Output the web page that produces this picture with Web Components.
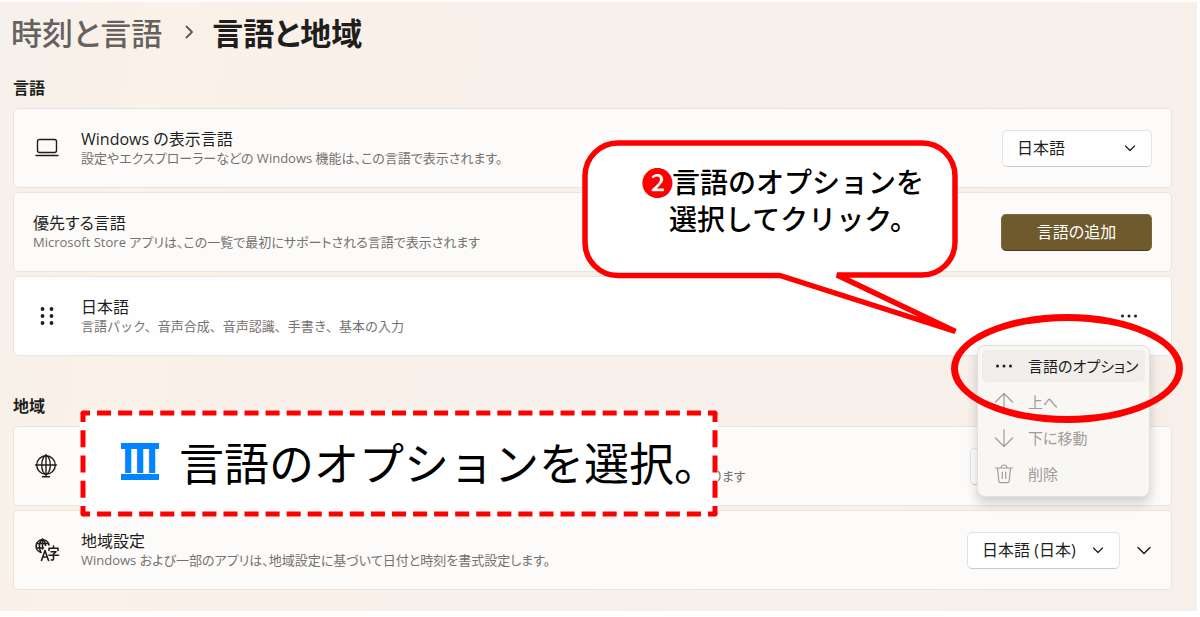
<!DOCTYPE html>
<html lang="ja">
<head>
<meta charset="utf-8">
<meta name="viewport" content="width=device-width, initial-scale=1">
<title>言語と地域</title>
<style>
  body {
    margin: 0;
    background: #fff;
    color: #1f1e1d;
    font-family: "Open Sans", "Noto Sans CJK JP", sans-serif;
    font-size: 16px;
    line-height: 20px;
  }
</style>
</head>
<body>
<settings-page>
  <bread-crumb slot="title" parent="時刻と言語" current="言語と地域"></bread-crumb>

  <settings-section heading="言語">
    <settings-card>
      <ui-icon slot="icon" name="laptop"></ui-icon>
      <span slot="title">Windows の表示言語</span>
      <span slot="description">設定やエクスプローラーなどの Windows 機能は、この言語で表示されます。</span>
      <drop-down label="Windows の表示言語" value="日本語" style="--width:150px"></drop-down>
    </settings-card>
    <settings-card>
      <span slot="title">優先する言語</span>
      <span slot="description">Microsoft Store アプリは、この一覧で最初にサポートされる言語で表示されます</span>
      <accent-button>言語の追加</accent-button>
    </settings-card>
    <settings-card active>
      <ui-icon slot="icon" name="grip"></ui-icon>
      <span slot="title">日本語</span>
      <span slot="description">言語パック、音声合成、音声認識、手書き、基本の入力</span>
      <more-menu>
        <menu-item icon="more" selected>言語のオプション</menu-item>
        <menu-item icon="up" disabled>上へ</menu-item>
        <menu-item icon="down" disabled>下に移動</menu-item>
        <menu-item icon="trash" disabled>削除</menu-item>
      </more-menu>
    </settings-card>
  </settings-section>

  <settings-section heading="地域">
    <settings-card style="--indent:630px">
      <ui-icon slot="icon" name="globe"></ui-icon>
      <span slot="description">ります</span>
      <drop-down label="国または地域" value="" style="--width:178px; margin-right:4px"></drop-down>
    </settings-card>
    <settings-card>
      <ui-icon slot="icon" name="locale"></ui-icon>
      <span slot="title">地域設定</span>
      <span slot="description">Windows および一部のアプリは、地域設定に基づいて日付と時刻を書式設定します。</span>
      <drop-down label="地域設定" value="日本語 (日本)" style="--width:153px"></drop-down>
      <expand-button></expand-button>
    </settings-card>
  </settings-section>

  <callout-bubble slot="note" number="❷">
    <span>言語のオプションを</span>
    <span slot="second">選択してクリック。</span>
  </callout-bubble>
  <step-banner slot="note" number="Ⅲ">言語のオプションを選択。</step-banner>
</settings-page>

<script>
  function define(name, html, setup) {
    const template = document.createElement('template');
    template.innerHTML = html;
    customElements.define(name, class extends HTMLElement {
      constructor() {
        super();
        this.attachShadow({ mode: 'open' }).append(template.content.cloneNode(true));
      }
      connectedCallback() {
        if (setup) setup(this, this.shadowRoot);
      }
    });
  }

  const icons = {
    laptop: '<rect x="4.5" y="5.5" width="19" height="13" rx="2"/><path d="M3 21.5h22"/>',
    grip: '<g fill="currentColor" stroke="none"><circle cx="9.500" cy="7" r="1.900"/><circle cx="18.500" cy="7" r="1.900"/><circle cx="9.500" cy="14" r="1.900"/><circle cx="18.500" cy="14" r="1.900"/><circle cx="9.500" cy="21" r="1.900"/><circle cx="18.500" cy="21" r="1.900"/></g>',
    globe: '<circle cx="13" cy="13" r="9.300"/><ellipse cx="13" cy="13" rx="4.300" ry="9.300"/><path d="M2.500 13h21M13 2.500v22M9.500 24.800h7"/>',
    locale: '<g stroke-width="1.600"><path d="M8 16.500a6.500 6.500 0 1 1 8-7.500"/><path d="M9.500 3v10M3.500 7.500h12M3.500 12h7"/><path d="M7.500 15.500C5.500 11 6 5.500 9.500 3.300c2.200 1.500 3 3.700 3 6.200"/><path d="M8.500 24.500l3.500-10 3.500 10M9.800 21h4.400"/><path d="M20.500 10v2M16 14.500v-2.300h9v2.300M18 15.700h5L20.500 18v5q0 1.300-2.300 1M16 19.300h9.500"/></g>',
    more: '<g fill="currentColor" stroke="none"><circle cx="7.500" cy="14" r="1.500"/><circle cx="14" cy="14" r="1.500"/><circle cx="20.500" cy="14" r="1.500"/></g>',
    up: '<path d="M14 22.500V5.500M5.500 14L14 5.500l8.500 8.500"/>',
    down: '<path d="M14 5.500v17M5.500 14l8.500 8.500 8.500-8.500"/>',
    trash: '<path d="M5.500 8h17M7.500 8l1.300 13q.2 1.700 2 1.700h6.400q1.800 0 2-1.700L20.500 8M11 8a3 3 0 0 1 6 0M12.300 12v6.500M15.700 12v6.500"/>',
    chevron: '<path d="M9.500 12l4.500 4.500 4.500-4.500"/>',
    expand: '<path d="M8 11.500l6 6 6-6"/>',
    next: '<path d="M11.500 8.500L17 14l-5.500 5.500"/>'
  };

  define('ui-icon', `
    <style>
      :host { display: block; width: 28px; height: 28px; flex: none; }
      svg { display: block; width: 28px; height: 28px; fill: none; stroke: currentColor;
            stroke-width: var(--stroke, 1.4); stroke-linecap: round; stroke-linejoin: round; }
    </style>
    <svg viewBox="0 0 28 28" aria-hidden="true"></svg>`,
    (el, root) => { root.querySelector('svg').innerHTML = icons[el.getAttribute('name')]; });

  define('settings-page', `
    <style>
      :host { display: block; position: relative; padding-top: 2px; }
      main { display: flex; flex-direction: column; margin-right: 3px; padding: 6px 25px 21px 13px;
             background: linear-gradient(100deg, #f6f1ec 0, #faf1e8 12%, #f8f0ea 40%, #f7f0eb 75%, #f7efe9 100%); }
    </style>
    <main><slot name="title"></slot><slot></slot></main>
    <slot name="note"></slot>`);

  define('bread-crumb', `
    <style>
      :host { display: block; }
      nav, h1 { display: flex; align-items: center; margin: 0; font-size: 31px; line-height: 48px;
                font-weight: 500; font-family: "Noto Sans CJK JP", sans-serif; font-feature-settings: "palt"; }
      nav { margin-left: -2px; }
      a { color: #65615e; text-decoration: none; }
      h1 { font-weight: 700; }
      ui-icon { margin: 0 9px 0 13px; color: #5c5855; --stroke: 1.8; }
    </style>
    <nav><a href="#"></a><ui-icon name="next"></ui-icon><h1></h1></nav>`,
    (el, root) => {
      root.querySelector('a').textContent = el.getAttribute('parent');
      root.querySelector('h1').textContent = el.getAttribute('current');
    });

  define('settings-section', `
    <style>
      :host { display: block; padding-top: 22px; }
      :host(:last-of-type) { padding-top: 40px; }
      h2 { margin: 0 0 10px; font-size: 16px; line-height: 20px; font-weight: 700; }
      div { display: flex; flex-direction: column; gap: 4px; }
    </style>
    <section><h2></h2><div><slot></slot></div></section>`,
    (el, root) => { root.querySelector('h2').textContent = el.getAttribute('heading'); });

  define('settings-card', `
    <style>
      :host { display: flex; align-items: center; box-sizing: border-box; min-height: 80px;
              padding: 0 19px; border: 1px solid #ebe4de; border-radius: 5px; background: #fcfbf9; }
      :host([active]) { background: #fefefe; }
      slot[name="icon"]::slotted(*) { margin-right: 20px; }
      .text { flex: 1; min-width: 0; }
      .title { min-height: 20px; line-height: 20px; font-feature-settings: "palt"; }
      .desc { padding-left: var(--indent, 0); font-size: 13px; line-height: 18px; color: #75716e;
              font-feature-settings: "palt"; }
      :host([active]) .desc { font-feature-settings: normal; }
    </style>
    <slot name="icon"></slot>
    <div class="text">
      <div class="title"><slot name="title"></slot></div>
      <div class="desc"><slot name="description"></slot></div>
    </div>
    <slot></slot>`);

  define('drop-down', `
    <style>
      :host { display: grid; width: var(--width); align-items: center; }
      select { grid-area: 1 / 1; width: 100%; height: 37px; margin: 0; padding: 0 14px;
               appearance: none; border: 1px solid #e6e2df; border-bottom-color: #cfcac6;
               border-radius: 5px; background: #fefefe; color: inherit; font: inherit; }
      ui-icon { grid-area: 1 / 1; justify-self: end; margin-right: 8px; pointer-events: none; --stroke: 1.2; }
    </style>
    <select><option></option></select><ui-icon name="chevron"></ui-icon>`,
    (el, root) => {
      root.querySelector('select').setAttribute('aria-label', el.getAttribute('label'));
      root.querySelector('option').textContent = el.getAttribute('value');
    });

  define('accent-button', `
    <style>
      :host { display: block; }
      button { width: 151px; height: 37px; padding: 0; border: 1px solid #7d6940; border-bottom-color: #4a3b1c;
               border-radius: 5px; background: #6f5a2e; color: #fff; font: inherit; font-feature-settings: "palt"; }
    </style>
    <button type="button"><slot></slot></button>`);

  define('expand-button', `
    <style>
      :host { display: block; margin: 0 -6px 0 10px; }
      button { display: block; padding: 0; border: 0; background: none; color: inherit; --stroke: 1.5; }
    </style>
    <button type="button" aria-label="展開"><ui-icon name="expand"></ui-icon></button>`);

  define('more-menu', `
    <style>
      :host { display: block; position: relative; margin-right: 9px; }
      button { display: block; padding: 0; border: 0; background: none; color: inherit; }
      .menu { position: absolute; z-index: 1; top: 43px; right: -7px; width: 173px; box-sizing: border-box;
              display: flex; flex-direction: column; gap: 4px; padding: 4px 4px 6px; border: 1px solid #e4dfdb;
              border-radius: 8px; background: #f9f7f4; box-shadow: 0 6px 12px #0000002e; }
      .ring { position: absolute; z-index: 2; top: 12px; right: -40px; width: 232px; height: 109px;
              box-sizing: border-box; border: 7px solid #f00; border-radius: 50%; pointer-events: none; }
    </style>
    <button type="button" aria-label="その他" aria-expanded="true"><ui-icon name="more"></ui-icon></button>
    <div class="menu" role="menu"><slot></slot></div>
    <div class="ring"></div>`);

  define('menu-item', `
    <style>
      :host { display: block; }
      button { display: flex; align-items: center; gap: 10px; width: 100%; height: 32px; padding: 0 8px;
               border: 0; border-radius: 5px; background: none; color: inherit; font: inherit; font-size: 15px;
               white-space: nowrap; font-feature-settings: "palt"; --stroke: 1.2; }
      button:disabled { color: #a09c99; }
      :host([selected]) button { background: #f0edea; }
    </style>
    <button type="button" role="menuitem"><ui-icon></ui-icon><slot></slot></button>`,
    (el, root) => {
      const icon = document.createElement('ui-icon');
      icon.setAttribute('name', el.getAttribute('icon'));
      root.querySelector('ui-icon').replaceWith(icon);
      root.querySelector('button').disabled = el.hasAttribute('disabled');
    });

  define('callout-bubble', `
    <style>
      :host { display: block; position: absolute; z-index: 3; top: 140px; right: 242px; width: 376px;
              box-sizing: border-box; height: 138px; padding: 23px 0 0 61px;
              font: 500 28px/37px "Noto Sans CJK JP", sans-serif; color: #000; white-space: nowrap; }
      svg { position: absolute; top: 0; left: 0; overflow: visible; }
      p { position: relative; display: flex; margin: 0; }
      b { width: 29px; font-size: 32px; font-weight: 500; color: #f00; display: flex; justify-content: center; }
      p + p { padding-left: 26px; }
    </style>
    <svg width="376" height="138" fill="#fff" stroke="#f00" stroke-width="5.5" aria-hidden="true">
      <path d="M36 3H340a33 33 0 0 1 33 33V102a33 33 0 0 1-33 33H255L373.500 191.500 198 135.500H36a33 33 0 0 1-33-33V36a33 33 0 0 1 33-33z" stroke-linejoin="bevel"/>
    </svg>
    <p><b></b><slot></slot></p>
    <p><slot name="second"></slot></p>`,
    (el, root) => { root.querySelector('b').textContent = el.getAttribute('number'); });

  define('step-banner', `
    <style>
      :host { display: flex; position: absolute; z-index: 3; top: 410px; left: 80px; width: 638px; height: 107px;
              box-sizing: border-box; padding: 0 0 4px 41px; align-items: center; gap: 20px; background: #fff;
              font: 400 45px/60px "Noto Sans CJK JP", sans-serif; color: #000; white-space: nowrap;
              font-feature-settings: "halt"; }
      b { display: flex; align-items: center; justify-content: center; box-sizing: border-box; width: 38px;
          height: 37px; padding-bottom: 5px; border: solid #0084ff; border-width: 6px 0; color: #0084ff;
          font-size: 34px; line-height: 20px; font-weight: 900; }
      svg { position: absolute; inset: 3px; width: calc(100% - 6px); height: calc(100% - 6px);
            overflow: visible; stroke: #f00; stroke-width: 5; }
      .h { stroke-dasharray: 14 7; stroke-dashoffset: 7; }
      .v { stroke-dasharray: 17 8; stroke-dashoffset: 8; }
      circle { fill: #f00; stroke: none; }
    </style>
    <svg aria-hidden="true">
      <line class="h" x2="100%" pathLength="630"/><line class="h" y1="100%" x2="100%" y2="100%" pathLength="630"/>
      <line class="v" y2="100%" pathLength="100"/><line class="v" x1="100%" x2="100%" y2="100%" pathLength="100"/>
      <circle r="2.500"/><circle cx="100%" r="2.500"/><circle cy="100%" r="2.500"/><circle cx="100%" cy="100%" r="2.500"/>
    </svg>
    <b></b><span><slot></slot></span>`,
    (el, root) => { root.querySelector('b').textContent = el.getAttribute('number'); });
</script>
</body>
</html>
